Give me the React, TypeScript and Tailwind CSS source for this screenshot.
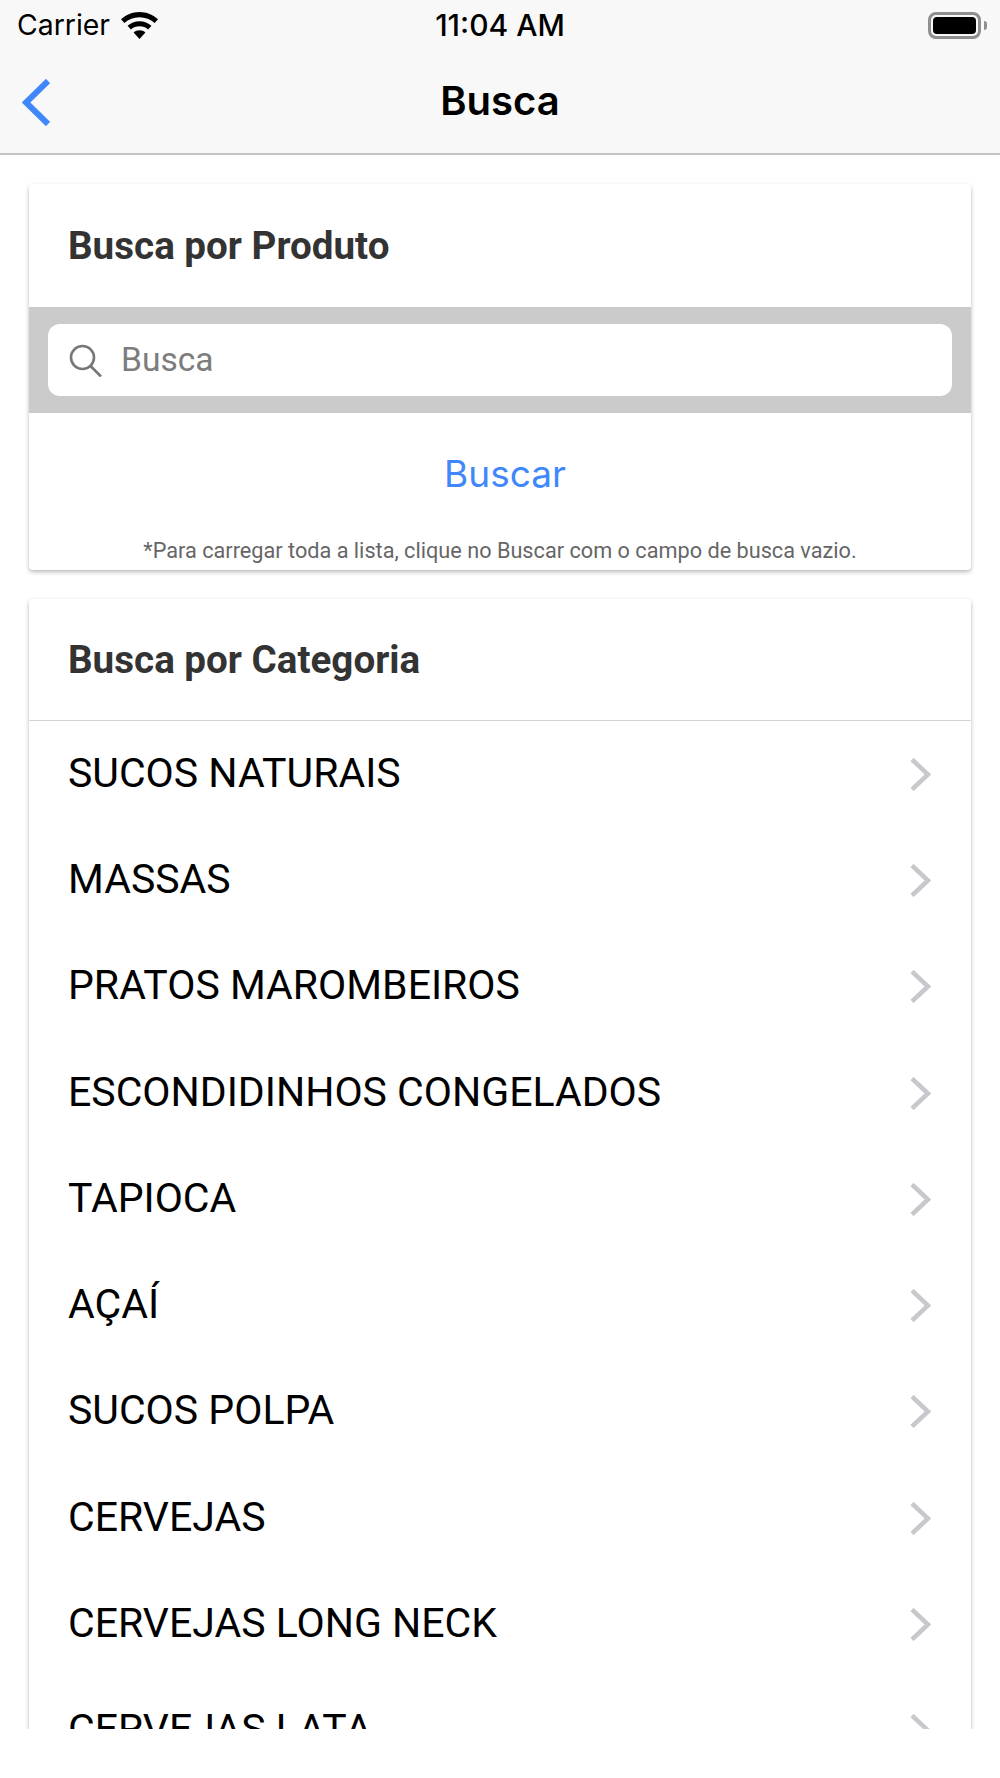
import React from 'react';

const categories = [
  'SUCOS NATURAIS',
  'MASSAS',
  'PRATOS MAROMBEIROS',
  'ESCONDIDINHOS CONGELADOS',
  'TAPIOCA',
  'AÇAÍ',
  'SUCOS POLPA',
  'CERVEJAS',
  'CERVEJAS LONG NECK',
  'CERVEJAS LATA',
];

const cardClass = 'mx-[29px] bg-white rounded-[4px] shadow-[0_2px_4px_rgba(0,0,0,0.28)]';

const App: React.FC = () => {
  return (
    <div className="w-[1000px] h-[1778px] bg-white flex flex-col font-['Roboto',sans-serif]">
      {/* Status bar + nav */}
      <header className="h-[155px] shrink-0 bg-[#f8f8f8] border-b-2 border-[#c4c4c4] flex flex-col">
        <div className="h-[50px] px-[17px] flex items-center relative font-['Inter',sans-serif] text-black">
          <span className="text-[28.4px] leading-none">Carrier</span>
          <svg className="ml-[11px] w-[37px] h-[27px]" viewBox="0 0 37 27" fill="black">
            <path d="M18.5 0C11.4 0 5 2.8 0 7.3l3.4 3.7C7.5 7.3 12.8 5.2 18.5 5.2s11 2.1 15.1 5.8L37 7.3C32 2.8 25.6 0 18.5 0z" />
            <path d="M18.5 9.2c-4.6 0-8.8 1.8-12 4.6l3.4 3.7c2.3-2.1 5.3-3.2 8.6-3.2s6.3 1.1 8.6 3.2l3.4-3.7c-3.2-2.8-7.4-4.6-12-4.6z" />
            <path d="M18.5 18.3c-2.3 0-4.3.8-5.9 2.2l5.9 6.5 5.9-6.5c-1.6-1.4-3.6-2.2-5.9-2.2z" />
          </svg>
          <span className="absolute left-0 right-0 text-center text-[30px] leading-none font-medium pointer-events-none">11:04 AM</span>
          <div className="ml-auto flex items-center mr-[-4px]">
            <div className="w-[53px] h-[27px] rounded-[8px] border-[3px] border-[#8f8f8f] p-[2px]">
              <div className="w-full h-full bg-black rounded-[4px]" />
            </div>
            <div className="w-[3px] h-[9px] ml-[3px] bg-[#8f8f8f] rounded-r-full" />
          </div>
        </div>
        <div className="flex-1 relative flex items-center justify-center">
          <svg className="absolute left-[22px] top-[29px] w-[28px] h-[47px]" viewBox="0 0 28 47" fill="none" stroke="#3f87fb" strokeWidth="6">
            <path d="M26 2 L4 23.5 L26 45" />
          </svg>
          <h1 className="text-[40px] leading-none font-semibold text-black font-['Inter',sans-serif] mb-[2px]">Busca</h1>
        </div>
      </header>

      {/* Scroll content */}
      <main className="h-[1574px] shrink-0 overflow-hidden pt-[29px]">
        <section className={cardClass}>
          <h2 className="h-[123px] pl-[39px] pt-[2px] flex items-center text-[38.6px] leading-none font-bold text-[#333333]">Busca por Produto</h2>
          <div className="bg-[#cbcbcb] h-[106px] px-[19px] pt-[17px] pb-[17px]">
            <div className="bg-white h-[72px] rounded-[12px] flex items-center pl-[21px]">
              <svg className="w-[33px] h-[33px]" viewBox="0 0 33 33" fill="none" stroke="#777777" strokeWidth="2.6">
                <circle cx="13.5" cy="13.5" r="11.5" />
                <path d="M21.5 22 L32 32.5" />
              </svg>
              <span className="ml-[19px] text-[33.6px] leading-none text-[#7c7c7c]">Busca</span>
            </div>
          </div>
          <div className="h-[157px] flex flex-col items-center">
            <button className="mt-[42px] ml-[10px] text-[37px] leading-none text-[#3f87fb] font-['Inter',sans-serif]">Buscar</button>
            <p className="mt-[48px] text-[21.7px] leading-none text-[#666666]">*Para carregar toda a lista, clique no Buscar com o campo de busca vazio.</p>
          </div>
        </section>

        <section className={`${cardClass} mt-[29px]`}>
          <h2 className="h-[122px] pl-[39px] pt-[2px] flex items-center border-b border-[#d4d4d4] text-[38.6px] leading-none font-bold text-[#333333]">Busca por Categoria</h2>
          <ul>
            {categories.map((name) => (
              <li key={name} className="h-[106.3px] pl-[39px] pr-[40px] flex items-center justify-between">
                <span className="text-[41px] leading-none text-black mb-[2px]">{name}</span>
                <svg className="w-[21px] h-[33px] shrink-0" viewBox="0 0 21 33" fill="none" stroke="#c7c7cc" strokeWidth="4.5">
                  <path d="M2 1.5 L18 16.5 L2 31.5" />
                </svg>
              </li>
            ))}
          </ul>
        </section>
      </main>
    </div>
  );
};

export default App;
